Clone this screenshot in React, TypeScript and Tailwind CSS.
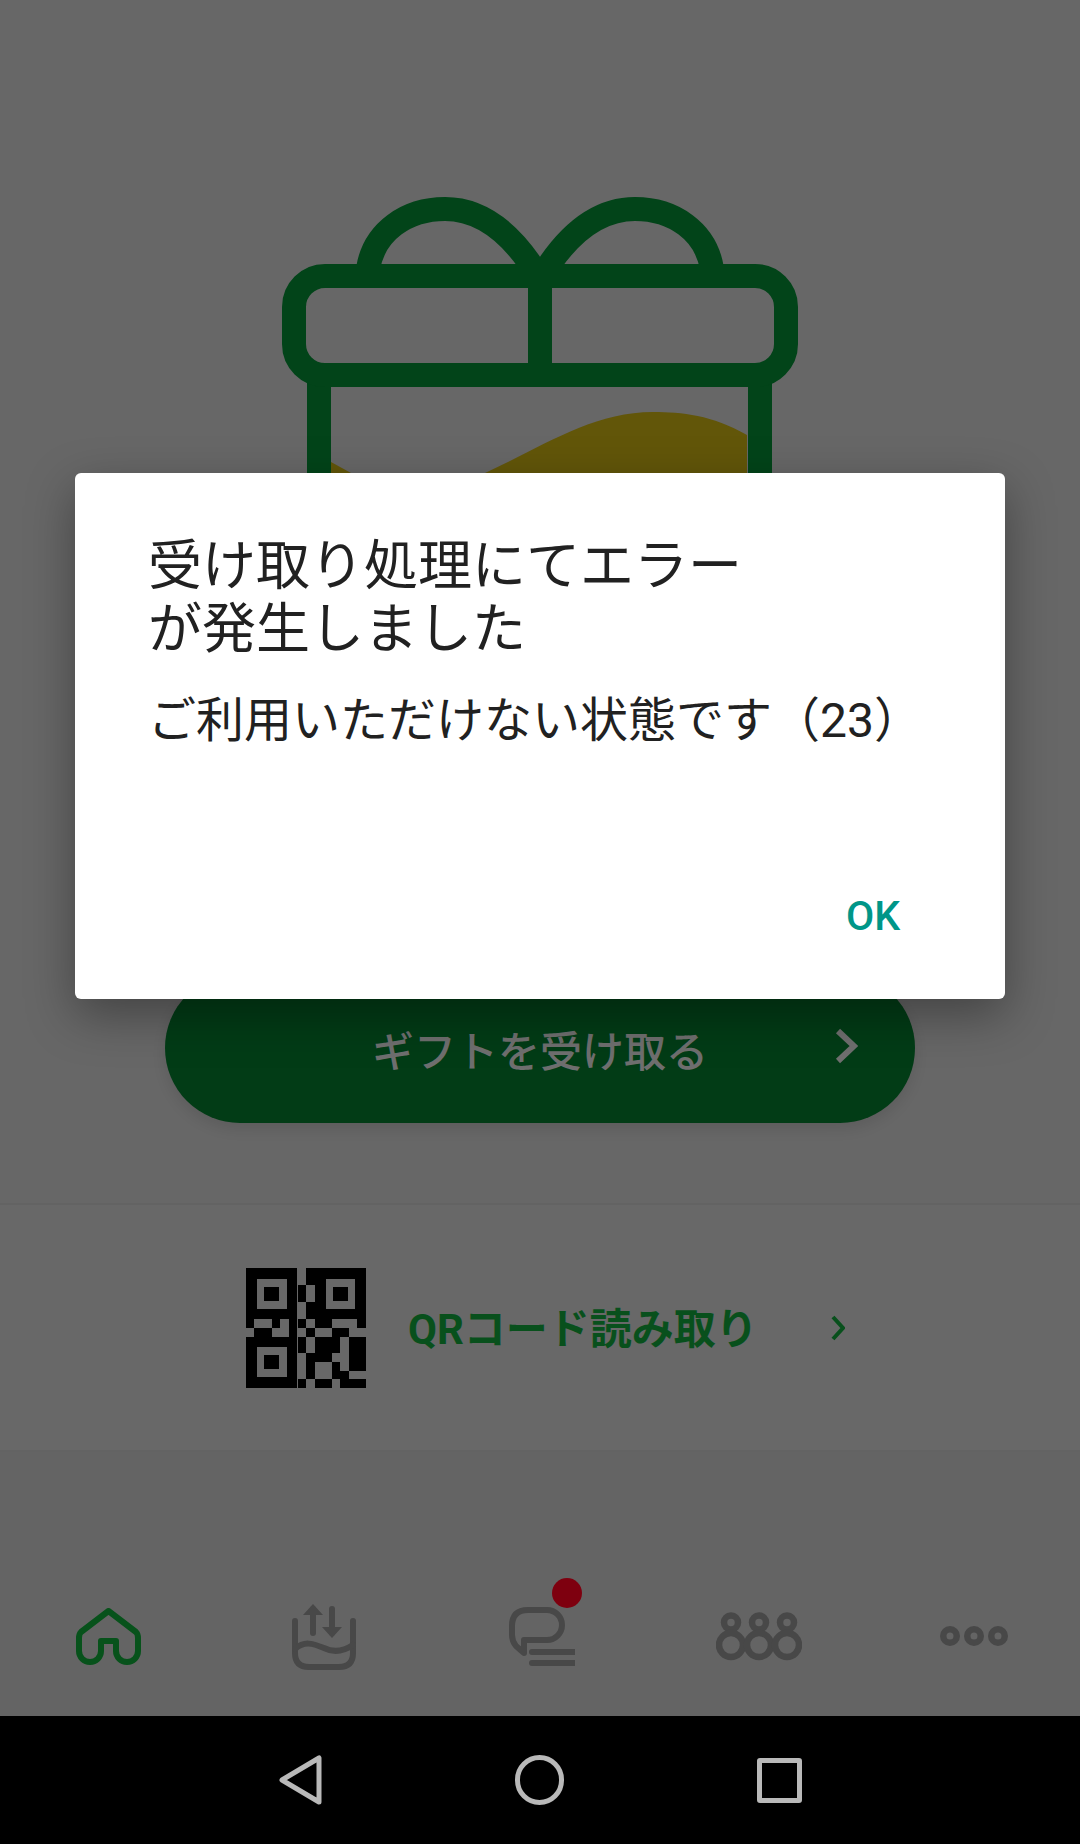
import React from "react";

// black modules of the QR mark, in the coordinates of the viewBox below
const qrBlack: number[][] = [
  [48, 54, 152, 152], [255, 54, 153, 152], [48, 260, 152, 154],
  [228, 54, 27, 51], [203, 105, 25, 52], [228, 157, 27, 51], [203, 208, 25, 25], [228, 233, 27, 27],
  [203, 260, 25, 50], [228, 310, 27, 78], [203, 388, 25, 26],
  [48, 208, 25, 25], [125, 208, 25, 25], [176, 208, 24, 25], [73, 233, 52, 27], [176, 233, 24, 27],
  [255, 208, 50, 25], [382, 208, 26, 25], [305, 233, 52, 27],
  [255, 260, 75, 50], [357, 260, 51, 50], [255, 310, 50, 26], [357, 310, 51, 52],
  [305, 336, 25, 26], [305, 362, 52, 26], [255, 388, 50, 26], [330, 388, 78, 26],
];

const qrGray: number[][] = [
  [80, 87, 90, 90], [287, 87, 88, 90], [80, 292, 90, 88],
];

const qrCenters: number[][] = [
  [102, 110, 46, 44], [309, 110, 45, 44], [102, 314, 46, 44],
];

function QrMark() {
  return (
    <svg width="120" height="120" viewBox="48 54 360 360" shapeRendering="crispEdges" className="shrink-0">
      {qrBlack.map((r, i) => <rect key={i} x={r[0]} y={r[1]} width={r[2]} height={r[3]} fill="#000000" />)}
      {qrGray.map((r, i) => <rect key={i} x={r[0]} y={r[1]} width={r[2]} height={r[3]} fill="#686868" />)}
      {qrCenters.map((r, i) => <rect key={i} x={r[0]} y={r[1]} width={r[2]} height={r[3]} fill="#000000" />)}
    </svg>
  );
}

function GiftIcon() {
  return (
    <svg width="516" height="420" viewBox="0 0 516 420" fill="none">
      <path d="M49 265 L69 276 H49 Z" fill="#625609" />
      <path d="M49 276 H465 V420 H49 Z" fill="#625609" />
      <path d="M465 238 C430 218 400 215 371 215 C310 215 260 250 203 276 H465 Z" fill="#625609" />
      <path d="M37 185 V420 M478 185 V420" stroke="#024419" strokeWidth="24" />
      <path d="M86 72 C92 34 125 12 163 12 C200 12 232 38 258 82 C284 38 316 12 353 12 C391 12 424 34 430 72" stroke="#024419" strokeWidth="24" />
      <rect x="12" y="79" width="492" height="99" rx="31" stroke="#024419" strokeWidth="24" />
      <path d="M258 79 V178" stroke="#024419" strokeWidth="24" />
    </svg>
  );
}

function HomeIcon() {
  return (
    <svg width="65" height="57" viewBox="0 0 65 57" fill="none">
      <path d="M32.5 3 L60 24 Q62 26 62 30 V43 A11 11 0 0 1 40 43 V33 H25 V43 A11 11 0 0 1 3 43 V30 Q3 26 5 24 Z" stroke="#07521b" strokeWidth="6" strokeLinejoin="round" />
    </svg>
  );
}

function TrayIcon() {
  return (
    <svg width="64" height="67" viewBox="0 0 64 67" fill="none" stroke="#484848" strokeWidth="6" strokeLinecap="round">
      <path d="M3 18 V50 Q3 64 17 64 H47 Q61 64 61 50 V18" />
      <path d="M3 46 C12 38 20 40 32 45 C42 50 52 48 61 42" />
      <path d="M21 30 V6 M40 6 V30" />
      <path d="M21 1 L31 12 H11 Z M40 35 L30 24 H50 Z" fill="#484848" stroke="none" />
    </svg>
  );
}

function ChatIcon() {
  return (
    <svg width="66" height="59" viewBox="0 0 66 59" fill="none" stroke="#484848" strokeWidth="6">
      <path d="M19 3 H38 A15 15 0 0 1 38 33 H15 V46 L7 39 Q3 34 3 28 V19 Q3 3 19 3 Z" strokeLinejoin="round" />
      <path d="M23 45 H65 M23 56 H65" strokeLinecap="round" />
    </svg>
  );
}

function GroupsIcon() {
  return (
    <svg width="86" height="49" viewBox="0 0 86 49" fill="none" stroke="#484848" strokeWidth="6.5">
      <circle cx="15" cy="10.5" r="7" />
      <circle cx="43" cy="10.5" r="7" />
      <circle cx="71" cy="10.5" r="7" />
      <circle cx="15" cy="33" r="12" />
      <circle cx="43" cy="33" r="12" />
      <circle cx="71" cy="33" r="12" />
    </svg>
  );
}

function MoreIcon() {
  return (
    <svg width="68" height="20" viewBox="0 0 68 20" fill="none" stroke="#484848" strokeWidth="6.5">
      <circle cx="10" cy="10" r="6.75" />
      <circle cx="34" cy="10" r="6.75" />
      <circle cx="58" cy="10" r="6.75" />
    </svg>
  );
}

export default function App() {
  return (
    <div className="relative w-[1080px] h-[1844px] overflow-hidden bg-[#676767] font-['Roboto','Noto_Sans_CJK_JP',sans-serif]">
      {/* GIFT */}
      <div className="h-[973px] pt-[197px] pl-[282px] overflow-hidden">
        <GiftIcon />
      </div>

      {/* RECEIVE BUTTON */}
      <div className="relative mx-[165px] h-[150px] rounded-full bg-[#023c16] flex items-center justify-center pt-[8px] shadow-[0_6px_14px_rgba(0,0,0,0.1)]">
        <span className="text-[42px] font-medium text-[#6f6f6f]">ギフトを受け取る</span>
        <svg className="absolute left-[669px] top-[55px]" width="24" height="36" viewBox="0 0 24 36" fill="none">
          <path d="M4 3 L20 18 L4 33" stroke="#6f6f6f" strokeWidth="6" />
        </svg>
      </div>

      {/* QR ROW */}
      <div className="mt-[80px] h-[249px] bg-[#686868] border-y-2 border-[#636363] flex items-center pl-[246px]">
        <QrMark />
        <span className="ml-[42px] pt-[4px] text-[42px] font-bold text-[#08501c]">QRコード読み取り</span>
        <svg className="ml-[73px]" width="14" height="28" viewBox="0 0 14 28" fill="none">
          <path d="M2 3 L12 14 L2 25" stroke="#08501c" strokeWidth="4" />
        </svg>
      </div>

      {/* BOTTOM NAV */}
      <div className="h-[264px] bg-[#646464] grid grid-cols-5 items-center justify-items-center pt-[104px]">
        <HomeIcon />
        <TrayIcon />
        <div className="relative ml-[4px] h-[59px]">
          <ChatIcon />
          <div className="absolute left-[43px] top-[-29px] w-[30px] h-[30px] rounded-full bg-[#7e000f]" />
        </div>
        <div className="ml-[6px]">
          <GroupsIcon />
        </div>
        <div className="ml-[4px]">
          <MoreIcon />
        </div>
      </div>

      {/* SYSTEM BAR */}
      <div className="h-[128px] bg-black flex items-center justify-center gap-[193px]">
        <svg width="43" height="50" viewBox="0 0 43 50" fill="none">
          <path d="M40 3 V47 L3 25 Z" stroke="#b9b9b9" strokeWidth="5" strokeLinejoin="round" />
        </svg>
        <div className="w-[49px] h-[50px] rounded-full border-[5px] border-[#b9b9b9]" />
        <div className="w-[45px] h-[45px] rounded-[3px] border-[5px] border-[#b9b9b9]" />
      </div>

      {/* ERROR DIALOG */}
      <div className="absolute left-[75px] top-[473px] w-[930px] h-[526px] bg-white rounded-[6px] shadow-[0_16px_48px_rgba(0,0,0,0.35)] pt-[62px] pl-[73px] flex flex-col">
        <h1 className="text-[54px] leading-[63px] text-[#212121] font-normal">
          受け取り処理にてエラー<br />が発生しました
        </h1>
        <p className="mt-[30px] text-[48px] leading-[60px] text-[#212121]">ご利用いただけない状態です（23）</p>
        <button className="absolute left-[771px] top-[418px] text-[41px] leading-[50px] font-medium text-[#009688]">OK</button>
      </div>
    </div>
  );
}
